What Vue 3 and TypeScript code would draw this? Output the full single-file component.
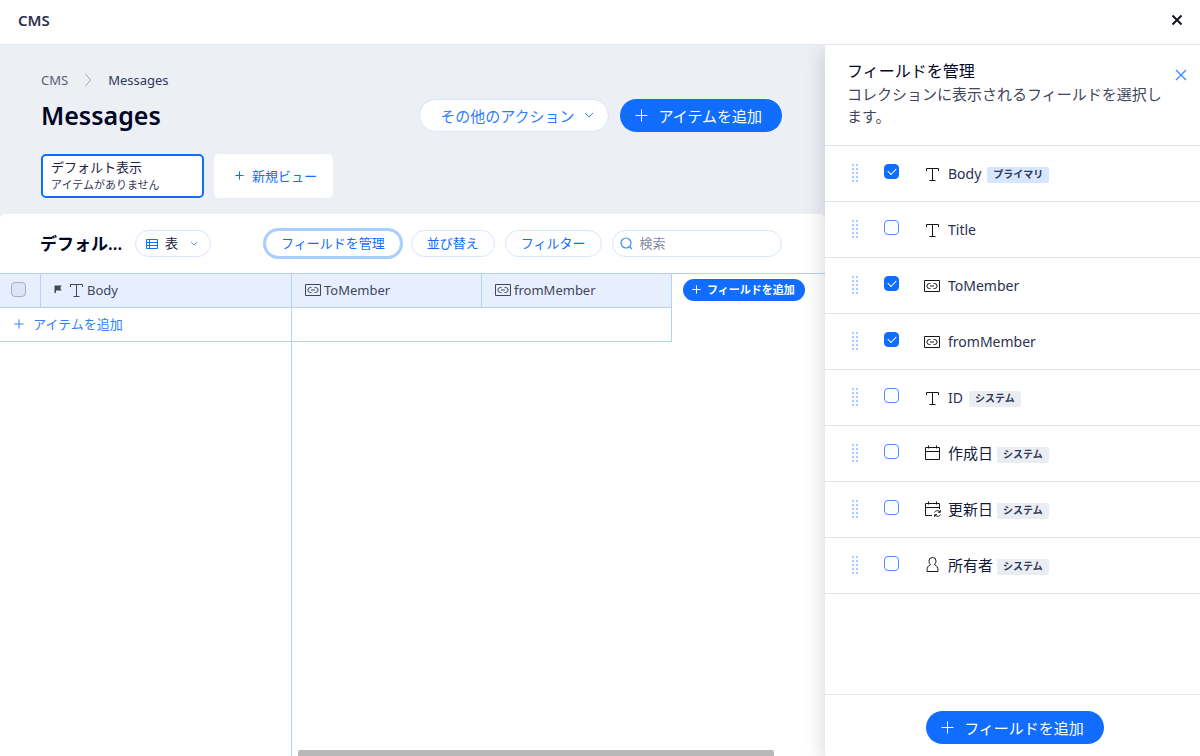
<script setup lang="ts">
import { h, ref } from 'vue'

type IconName = 'text' | 'link' | 'calendar' | 'calendarSync' | 'person'

interface Field {
  id: string
  label: string
  icon: IconName
  visible: boolean
  badge?: string
  primary?: boolean
  japanese?: boolean
}

const iconPaths: Record<IconName, string> = {
  text: 'M3.5 6V3.5h12V6M9.5 3.5v12M6.500 15.500h6',
  link: 'M1.500 3.500h15v11h-15zM7.500 6.500H6.400a2.500 2.500 0 0 0 0 5h1.100M10.500 6.500h1.100a2.500 2.500 0 0 1 0 5h-1.100M7 9h4',
  calendar: 'M2.5 3.5h14v12h-14zM2.500 7.500h14M5.500 1.500v3M13.500 1.500v3',
  calendarSync:
    'M9 15.5H2.500v-12h14V9M2.500 7.500h14M5.500 1.500v3M13.500 1.500v3M11.500 12.500c1-2.300 4.500-2.300 5.500-.500M17.300 10v2.300H15M17.500 14.500c-1 2.300-4.500 2.300-5.500.500M11.700 17v-2.300H14',
  person:
    'M9.500 1.500A3.500 3.500 0 0 0 6 5c0 1.800.7 2.600 1.600 3.600C5.200 9.500 4 11.600 4 14.500v1h11v-1c0-2.900-1.200-5-3.600-5.900C12.300 7.600 13 6.800 13 5a3.500 3.500 0 0 0-3.500-3.500z',
}

const FieldIcon = (props: { name: IconName }) =>
  h('svg', { viewBox: '0 0 18 18', width: 18, height: 18, 'aria-hidden': 'true' }, [
    h('path', { d: iconPaths[props.name], fill: 'none', stroke: 'currentColor', 'stroke-width': 1 }),
  ])
FieldIcon.props = ['name']

const PlusIcon = (props: { size: number }) =>
  h('svg', { viewBox: '0 0 13 13', width: props.size, height: props.size, 'aria-hidden': 'true' }, [
    h('path', { d: 'M6.5 0.5v12M0.500 6.500h12', fill: 'none', stroke: 'currentColor', 'stroke-width': 13 / props.size }),
  ])
PlusIcon.props = ['size']

const fields = ref<Field[]>([
  { id: 'body', label: 'Body', icon: 'text', visible: true, badge: 'プライマリ', primary: true },
  { id: 'title', label: 'Title', icon: 'text', visible: false },
  { id: 'to', label: 'ToMember', icon: 'link', visible: true },
  { id: 'from', label: 'fromMember', icon: 'link', visible: true },
  { id: 'id', label: 'ID', icon: 'text', visible: false, badge: 'システム' },
  { id: 'created', label: '作成日', icon: 'calendar', visible: false, badge: 'システム', japanese: true },
  { id: 'updated', label: '更新日', icon: 'calendarSync', visible: false, badge: 'システム', japanese: true },
  { id: 'owner', label: '所有者', icon: 'person', visible: false, badge: 'システム', japanese: true },
])

const search = ref('')
const layout = ref('table')
</script>

<template>
  <div class="app">
    <header class="topbar">
      <span class="topbar-title">CMS</span>
      <button class="icon-btn dark" type="button" aria-label="閉じる">
        <svg viewBox="0 0 12 12" width="12" height="12"><path d="M1.500 1.500l9 9M10.500 1.500l-9 9" fill="none" stroke="currentColor" stroke-width="2" /></svg>
      </button>
    </header>

    <div class="body">
      <main class="main">
        <section class="hero">
          <nav class="crumbs">
            <a href="#">CMS</a>
            <svg viewBox="0 0 8 14" width="8" height="14"><path d="M1.500 1l5 6-5 6" fill="none" stroke="#a3a9b8" /></svg>
            <span>Messages</span>
          </nav>
          <div class="title-row">
            <h1>Messages</h1>
            <button class="btn outline" type="button">
              その他のアクション
              <svg viewBox="0 0 10 6" width="10" height="6"><path d="M1 1l4 4 4-4" fill="none" stroke="currentColor" /></svg>
            </button>
            <button class="btn primary" type="button"><PlusIcon :size="13" />アイテムを追加</button>
          </div>
          <div class="views">
            <button class="view active" type="button">
              <span class="view-name">デフォルト表示</span>
              <span class="view-info">アイテムがありません</span>
            </button>
            <button class="view new" type="button"><PlusIcon :size="9" />新規ビュー</button>
          </div>
        </section>

        <section class="sheet">
          <div class="toolbar">
            <h2>デフォル...</h2>
            <label class="layout-pick">
              <svg viewBox="0 0 12 10" width="12" height="10"><path d="M.5.500h11v9H.500zM.500 3.500h11M.500 6.500h11M3.500.500v9" fill="none" stroke="#116dff" /></svg>
              <select v-model="layout" aria-label="レイアウト"><option value="table">表</option></select>
              <svg viewBox="0 0 8 5" width="8" height="5"><path d="M1 1l3 3 3-3" fill="none" stroke="#5c9dff" /></svg>
            </label>
            <div class="tools">
              <button class="pill focused" type="button">フィールドを管理</button>
              <button class="pill" type="button">並び替え</button>
              <button class="pill" type="button">フィルター</button>
              <label class="search">
                <svg viewBox="0 0 13 13" width="13" height="13"><path d="M6 1a5 5 0 1 0 0 10A5 5 0 0 0 6 1zM9.500 9.500l2.500 2.500" fill="none" stroke="#3c8bff" stroke-width="1.200" /></svg>
                <input v-model="search" type="text" placeholder="検索" aria-label="検索" />
              </label>
            </div>
          </div>

          <div class="grid-area">
            <table>
              <colgroup><col class="c-check" /><col class="c-body" /><col class="c-ref" /><col class="c-ref" /></colgroup>
              <thead>
                <tr>
                  <th><input class="check muted" type="checkbox" aria-label="すべて選択" /></th>
                  <th>
                    <span class="col-name">
                      <svg class="flag" viewBox="0 0 8 9" width="8" height="9"><path d="M.500.500h7L6.300 3l1.200 2.500H2V8H.500z" fill="currentColor" /></svg>
                      <FieldIcon name="text" />Body
                    </span>
                  </th>
                  <th><span class="col-name"><FieldIcon name="link" />ToMember</span></th>
                  <th><span class="col-name"><FieldIcon name="link" />fromMember</span></th>
                </tr>
              </thead>
              <tbody>
                <tr>
                  <td colspan="2"><button class="add-row" type="button"><PlusIcon :size="10" />アイテムを追加</button></td>
                  <td colspan="2"></td>
                </tr>
              </tbody>
            </table>
            <button class="add-col" type="button"><PlusIcon :size="9" />フィールドを追加</button>
          </div>
          <div class="rest">
            <div class="pinned"></div>
            <div class="thumb"></div>
          </div>
        </section>
      </main>

      <aside class="panel">
        <div class="panel-head">
          <div>
            <h3>フィールドを管理</h3>
            <p>コレクションに表示されるフィールドを選択します。</p>
          </div>
          <button class="icon-btn blue" type="button" aria-label="パネルを閉じる">
            <svg viewBox="0 0 12 12" width="12" height="12"><path d="M1 1l10 10M11 1L1 11" fill="none" stroke="currentColor" stroke-width="1.400" /></svg>
          </button>
        </div>
        <ul class="fields">
          <li v-for="field in fields" :key="field.id">
            <span class="handle"></span>
            <input :id="field.id" v-model="field.visible" class="check" type="checkbox" />
            <label :for="field.id" :class="{ jp: field.japanese }"><FieldIcon :name="field.icon" />{{ field.label }}</label>
            <span v-if="field.badge" class="badge" :class="{ accent: field.primary }">{{ field.badge }}</span>
          </li>
        </ul>
        <div class="panel-foot">
          <button class="btn primary" type="button"><PlusIcon :size="13" />フィールドを追加</button>
        </div>
      </aside>
    </div>
  </div>
</template>

<style>
body {
  margin: 0;
}
</style>

<style scoped>
.app,
.app * {
  box-sizing: border-box;
}
.app {
  display: flex;
  flex-direction: column;
  height: 100vh;
  overflow: hidden;
  color: #000624;
  background: #fff;
  font-family: "Noto Sans", "Noto Sans CJK JP", sans-serif;
  font-size: 13px;
}
button,
input,
select {
  font-family: inherit;
  font-size: inherit;
  margin: 0;
}
button {
  padding: 0;
  border: 0;
  background: none;
  cursor: pointer;
  white-space: nowrap;
}
h1,
h2,
h3,
p,
ul {
  margin: 0;
  padding: 0;
}
svg {
  flex: none;
  display: block;
}
.topbar {
  flex: none;
  display: flex;
  align-items: center;
  justify-content: space-between;
  height: 45px;
  padding: 0 17px 5px 18px;
  border-bottom: 1px solid #e4e7ec;
}
.topbar-title {
  font-size: 15px;
  font-weight: 600;
  color: #2b3150;
}
.icon-btn.dark {
  color: #16161d;
}
.icon-btn.blue {
  color: #3c8bff;
}
.body {
  flex: 1;
  min-height: 0;
  display: flex;
}
.main {
  flex: 1;
  min-width: 0;
  display: flex;
  flex-direction: column;
  background: #eceff4;
}
.hero {
  padding: 25px 43px 16px 41px;
}
.crumbs {
  display: flex;
  align-items: center;
  gap: 16px;
  height: 20px;
  color: #32375a;
}
.crumbs a {
  color: #595d70;
  text-decoration: none;
}
.title-row {
  display: flex;
  align-items: center;
  gap: 11px;
  height: 50px;
}
h1 {
  flex: 1;
  font-size: 25px;
  font-weight: 600;
}
.btn {
  display: flex;
  align-items: center;
  gap: 10px;
  height: 33px;
  border-radius: 17px;
  font-size: 15px;
}
.btn.primary {
  padding: 0 20px 0 15px;
  color: #fff;
  background: #116dff;
}
.btn.outline {
  padding: 0 14px 0 20px;
  color: #2f7dff;
  background: #fff;
  border: 1px solid #d6e6fe;
}
.views {
  display: flex;
  gap: 10px;
  padding-top: 14px;
}
.view {
  height: 44px;
  border-radius: 5px;
  background: #fff;
}
.view.active {
  display: flex;
  flex-direction: column;
  justify-content: center;
  width: 163px;
  padding: 0 8px 2px;
  text-align: left;
  border: 2px solid #116dff;
}
.view-name {
  line-height: 18px;
  color: #1c2240;
}
.view-info {
  font-size: 11px;
  line-height: 17px;
  color: #32375a;
}
.view.new {
  display: flex;
  align-items: center;
  gap: 8px;
  padding: 0 16px 2px 21px;
  color: #116dff;
}
.sheet {
  flex: 1;
  min-height: 0;
  display: flex;
  flex-direction: column;
  background: #fff;
  border-radius: 5px 5px 0 0;
}
.toolbar {
  display: flex;
  align-items: center;
  height: 59px;
  padding: 0 43px 0 40px;
}
h2 {
  width: 95px;
  padding-bottom: 2px;
  font-size: 17px;
  font-weight: 600;
  white-space: nowrap;
}
.layout-pick {
  display: flex;
  align-items: center;
  height: 27px;
  margin-right: 54px;
  padding: 0 12px 0 10px;
  border: 1px solid #d6e6fe;
  border-radius: 14px;
}
.layout-pick select {
  appearance: none;
  width: 32px;
  padding: 0 0 2px 7px;
  border: 0;
  color: #1c2240;
  background: none;
}
.tools {
  flex: 1;
  min-width: 0;
  display: flex;
  gap: 10px;
}
.pill {
  height: 27px;
  padding: 0 15px 2px;
  border: 1px solid #d6e6fe;
  border-radius: 14px;
  color: #116dff;
  background: #fff;
}
.pill.focused {
  border-color: #a8ceff;
  box-shadow: 0 0 0 2px #a8ceff;
}
.search {
  flex: 1;
  min-width: 0;
  display: flex;
  align-items: center;
  gap: 7px;
  height: 27px;
  padding: 0 7px;
  border: 1px solid #d6e6fe;
  border-radius: 14px;
}
.search input {
  flex: 1;
  min-width: 0;
  padding: 0 0 2px;
  border: 0;
  outline: 0;
  background: none;
}
.search input::placeholder {
  color: #868aa5;
}
.grid-area {
  display: flex;
  align-items: flex-start;
  gap: 11px;
  border-top: 1px solid #b4d1fb;
}
table {
  table-layout: fixed;
  width: 672px;
  border-collapse: separate;
  border-spacing: 0;
}
.c-check {
  width: 41px;
}
.c-body {
  width: 251px;
}
.c-ref {
  width: 190px;
}
th,
td {
  height: 34px;
  padding: 0 0 2px;
  border-right: 1px solid #b4d1fb;
  border-bottom: 1px solid #b4d1fb;
  text-align: left;
}
th {
  background: #e7effe;
  color: #42465c;
  font-weight: 400;
}
th .check {
  margin-left: 11px;
}
.col-name {
  display: flex;
  align-items: center;
  gap: 2px;
  padding-left: 12px;
}
.flag {
  margin: 0 3px 0 1px;
}
.add-row {
  display: flex;
  align-items: center;
  gap: 9px;
  padding-left: 14px;
  color: #2f80ff;
}
.add-col {
  display: flex;
  align-items: center;
  gap: 6px;
  height: 22px;
  margin-top: 5px;
  padding: 0 10px 2px 9px;
  border-radius: 11px;
  font-size: 11px;
  font-weight: 600;
  color: #fff;
  background: #116dff;
}
.rest {
  flex: 1;
  display: flex;
  align-items: flex-end;
  gap: 6px;
  padding-right: 51px;
}
.pinned {
  align-self: stretch;
  flex: none;
  width: 292px;
  border-right: 1px solid #b4d1fb;
}
.thumb {
  flex: 1;
  height: 6px;
  border-radius: 2px 2px 0 0;
  background: #b8b8b8;
}
.check {
  appearance: none;
  flex: none;
  display: grid;
  place-items: center;
  width: 15px;
  height: 15px;
  border: 1px solid #4d8dfa;
  border-radius: 4px;
  background: #fff;
}
.check:checked {
  border-color: #116dff;
  background: #116dff;
}
.check:checked::after {
  content: "";
  width: 7px;
  height: 4px;
  margin-bottom: 2px;
  border: solid #fff;
  border-width: 0 0 1px 1px;
  transform: rotate(-45deg);
}
.check.muted {
  border-color: #a6adbf;
  background: #dce5f5;
}
.panel {
  flex: none;
  display: flex;
  flex-direction: column;
  position: relative;
  width: 375px;
  background: #fff;
  box-shadow: 0 6px 20px rgba(0, 6, 36, 0.18);
  clip-path: inset(0 0 0 -30px);
}
.panel-head {
  display: flex;
  align-items: flex-start;
  justify-content: space-between;
  height: 101px;
  padding: 15px 13px 0 22px;
  border-bottom: 1px solid #dfe3eb;
}
.panel-head .icon-btn {
  margin-top: 9px;
}
.panel-head div {
  width: 317px;
}
h3 {
  font-size: 16px;
  line-height: 23px;
  font-weight: 400;
}
.panel-head p {
  font-size: 15px;
  line-height: 22px;
  color: #42465c;
}
.fields {
  flex: 1;
  list-style: none;
}
.fields li {
  display: flex;
  align-items: center;
  height: 56px;
  padding-left: 27px;
  border-bottom: 1px solid #dfe3eb;
}
.handle {
  width: 6px;
  height: 20px;
  background: radial-gradient(circle at 1px 1px, #a8c9fb 1px, transparent 1px) 0 0 / 4px 4px;
}
.fields .check {
  margin: 0 24px 4px 26px;
}
.fields label {
  display: flex;
  align-items: center;
  gap: 7px;
  font-size: 14px;
  color: #2b3150;
}
.fields label.jp {
  margin-bottom: 2px;
  font-size: 15px;
  color: #131a38;
}
.fields label svg {
  color: #16161d;
}
.badge {
  height: 16px;
  margin: 2px 0 0 6px;
  padding: 0 6px;
  border-radius: 2px;
  font-size: 10px;
  line-height: 15px;
  font-weight: 600;
  color: #32375a;
  background: #eaeef3;
}
.fields .jp + .badge {
  margin-left: 4px;
}
.badge.accent {
  background: #d6e6fe;
}
.panel-foot {
  display: flex;
  justify-content: center;
  padding: 16px 0 12px 5px;
  border-top: 1px solid #e4e8ee;
}
</style>
